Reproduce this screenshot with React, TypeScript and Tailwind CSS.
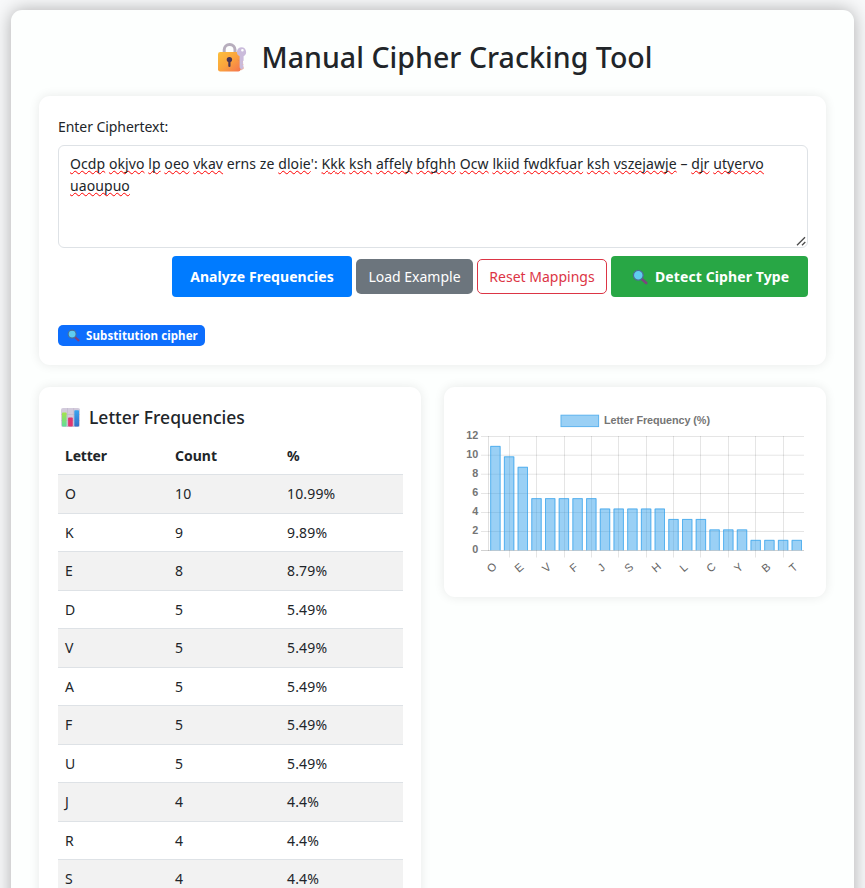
import React from "react";

const rows: [string, number, string][] = [
  ["O", 10, "10.99%"],
  ["K", 9, "9.89%"],
  ["E", 8, "8.79%"],
  ["D", 5, "5.49%"],
  ["V", 5, "5.49%"],
  ["A", 5, "5.49%"],
  ["F", 5, "5.49%"],
  ["U", 5, "5.49%"],
  ["J", 4, "4.4%"],
  ["R", 4, "4.4%"],
  ["S", 4, "4.4%"],
];

const bars = [
  10.99, 9.89, 8.79, 5.49, 5.49, 5.49, 5.49, 5.49, 4.4, 4.4, 4.4, 4.4, 4.4,
  3.3, 3.3, 3.3, 2.2, 2.2, 2.2, 1.1, 1.1, 1.1, 1.1,
];
const ticks = ["O", "E", "V", "F", "J", "S", "H", "L", "C", "Y", "B", "T"];
const gridX = [509, 536, 564, 591, 618, 646, 673, 700, 728, 755, 783];
const gridY = [436, 454.7, 473.7, 493, 512, 531];

function LockKey() {
  return (
    <svg className="mb-[2px] h-[30px] w-[30px] shrink-0" viewBox="0 0 30 30">
      <defs>
        <linearGradient id="lock" x1="0" y1="0" x2="1" y2="1">
          <stop offset="0" stopColor="#fbc03c" />
          <stop offset="0.5" stopColor="#fba43c" />
          <stop offset="1" stopColor="#f4744f" />
        </linearGradient>
      </defs>
      <path d="M7.2 12V7.8a5.4 5.4 0 0 1 10.8 0V12" fill="none" stroke="#b7aebd" strokeWidth="3" />
      <rect x="1" y="10" width="22.5" height="19.5" rx="2.2" fill="url(#lock)" />
      <circle cx="12.4" cy="17.6" r="2.7" fill="#4a3553" />
      <rect x="11.3" y="17.5" width="2.2" height="7.5" rx="1.1" fill="#4a3553" />
      <path d="M20.2 17.5l2.6 1V27l1 1.5 3-1.8-.2-1.6-1.2-1 1.2-1.5-1-1.3.6-2.8h-5z" fill="#d76e52" opacity="0.5" />
      <path d="M24.6 5.2a4.8 4.8 0 0 0-2 9.1v11.2l1.6 1.9 2.2-2v-2l-1-1 1-1.4-1-1.3 1.2-1.2v-4.3a4.8 4.8 0 0 0-2-9zm.8 1.8a1.3 1.3 0 1 1 0 2.6 1.3 1.3 0 0 1 0-2.6z" fill="#cabbdb" fillRule="evenodd" />
    </svg>
  );
}

function Magnifier({ className }: { className: string }) {
  return (
    <svg className={className} viewBox="0 0 16 16">
      <path d="M9.8 10l4.4 4" stroke="#7d4380" strokeWidth="2.6" strokeLinecap="round" />
      <circle cx="6.3" cy="6.3" r="4.9" fill="#5fcdf0" stroke="#4b6e94" strokeWidth="1.3" />
    </svg>
  );
}

function ChartIcon() {
  return (
    <svg className="h-[19px] w-[19px] shrink-0" viewBox="0 0 19 19">
      <defs>
        <linearGradient id="g" x1="0" y1="0" x2="0" y2="1">
          <stop offset="0" stopColor="#a5e34b" />
          <stop offset="1" stopColor="#5fdc9c" />
        </linearGradient>
        <linearGradient id="b" x1="0" y1="0" x2="0" y2="1">
          <stop offset="0" stopColor="#3aa5f0" />
          <stop offset="1" stopColor="#3470c8" />
        </linearGradient>
      </defs>
      <rect width="19" height="19" rx="2" fill="#d3cbdc" />
      <path d="M6.5 0v19M12.6 0v19M0 6.5h19M0 12.5h19" stroke="#bfb5cb" strokeWidth="0.6" />
      <rect x="1" y="4.4" width="4.6" height="14.2" rx="0.8" fill="url(#g)" />
      <rect x="7.1" y="9.6" width="4.7" height="9" rx="0.8" fill="#e0356f" />
      <rect x="13.3" y="2.2" width="4.7" height="16.4" rx="0.8" fill="url(#b)" />
    </svg>
  );
}

function Misspelt({ children }: { children: string }) {
  return (
    <span className="underline decoration-[#f00] decoration-wavy decoration-[1.25px] underline-offset-[1px] [text-decoration-skip-ink:none]">
      {children}
    </span>
  );
}

const message =
  "Ocdp okjvo lp oeo vkav erns ze dloie': Kkk ksh affely bfghh Ocw lkiid fwdkfuar ksh vszejawje – djr utyervo uaoupuo";
const known = ["erns", "ze", "–"];

function CipherText() {
  return (
    <>
      {message.split(" ").map((word, i) => {
        const m = word.match(/^([A-Za-z]+)(.*)$/);
        return (
          <React.Fragment key={i}>
            {i > 0 && " "}
            {known.includes(word) || !m ? word : (<><Misspelt>{m[1]}</Misspelt>{m[2]}</>)}
          </React.Fragment>
        );
      })}
    </>
  );
}

function FrequencyChart() {
  return (
    <svg className="block h-[174px] w-[346px]" viewBox="462 405 346 174" fontFamily="Liberation Sans, Arial, sans-serif" fontSize="10.8" fill="#666">
      <rect x="561" y="415.2" width="37.6" height="11.4" fill="#9ad0f5" stroke="#5cb3ee" />
      <text x="604" y="424.3" fontWeight="bold" fill="#757575" textLength="106">Letter Frequency (%)</text>
      {gridY.map((y) => (
        <rect key={y} x="481" y={y} width="323" height="1" fill="#000" fillOpacity="0.1" />
      ))}
      <rect x="481" y="550" width="323" height="1" fill="#000" fillOpacity="0.18" />
      <rect x="488" y="436" width="1" height="115" fill="#000" fillOpacity="0.12" />
      {gridX.map((x) => (
        <rect key={x} x={x} y="436" width="1" height="121.5" fill="#000" fillOpacity="0.1" />
      ))}
      {[12, 10, 8, 6, 4, 2, 0].map((v, i) => (
        <text key={v} x="478.3" y={439.3 + i * 19} textAnchor="end" fontWeight="bold" fill="#757575">{v}</text>
      ))}
      {bars.map((v, i) => {
        const left = 490.2 + i * 13.7;
        const top = 550.3 - v * 9.5;
        return (
          <g key={i}>
            <rect x={left} y={top} width="10.4" height={550.3 - top} fill="#36a2eb" fillOpacity="0.5" />
            <path d={`M${left + 0.5} 550.3V${top + 0.5}H${left + 9.9}V550.3`} fill="none" stroke="#36a2eb" strokeOpacity="0.75" strokeWidth="0.9" />
          </g>
        );
      })}
      {ticks.map((t, i) => (
        <text key={t} transform={`translate(${491.6 + i * 27.43} 567.5) rotate(-41)`} textAnchor="middle" y="3.9" fontSize="11.2">{t}</text>
      ))}
    </svg>
  );
}

const card = "rounded-[11px] bg-white shadow-[0_0_11px_rgba(0,0,0,0.09)]";

export default function App() {
  return (
    <div className="h-[888px] overflow-hidden bg-[#f8f9fa] px-[11px] pt-[10px] font-['Noto_Sans','Open_Sans',sans-serif] text-[14px] text-[#212529]">
      <div className="h-[1200px] rounded-[11px] bg-[#fdfffe] px-[28px] pt-[28px] shadow-[0_0_18px_rgba(0,0,0,0.3)]">
        <h1 className="flex h-[39px] items-center justify-center pl-[5px] text-[28.5px] font-medium">
          <LockKey />
          <span className="ml-[14px] whitespace-nowrap tracking-[0.05px]">Manual Cipher Cracking Tool</span>
        </h1>
        <section className={card + " mt-[19px] h-[269px] px-[19px] pt-[20px]"}>
          <label className="block h-[22px] leading-[22px] tracking-[-0.06px]">Enter Ciphertext:</label>
          <div className="relative mt-[7px] h-[103px] w-[750px] rounded-[6px] border border-[#dee2e6] pl-[11px] pt-[7px] leading-[22px]">
            <p className="w-[720px] tracking-[0.08px]"><CipherText /></p>
            <svg className="absolute bottom-[1px] right-[1px] h-[10px] w-[10px]" viewBox="0 0 10 10" stroke="#4a4a4a" strokeWidth="1.3">
              <path d="M1 9.3L9 1.3M6 9.3L9.3 6" fill="none" />
            </svg>
          </div>
          <div className="mt-[8px] flex h-[41px] w-[750px] items-center justify-end gap-[4px] whitespace-nowrap">
            <button className="h-[41px] w-[180px] rounded-[4px] bg-[#007bff] font-bold tracking-[0.06px] text-white">Analyze Frequencies</button>
            <button className="h-[35px] w-[117px] rounded-[5px] bg-[#6c757d] text-white">Load Example</button>
            <button className="h-[35px] w-[130px] rounded-[5px] border border-[#dc3545] text-[#dc3545]">Reset Mappings</button>
            <button className="flex h-[41px] w-[197px] items-center rounded-[4px] bg-[#28a745] pl-[21px] font-bold text-white">
              <Magnifier className="h-[16px] w-[16px]" />
              <span className="ml-[7px] tracking-[0.1px]">Detect Cipher Type</span>
            </button>
          </div>
          <div className="mt-[28px] flex h-[21px] w-[147px] items-center rounded-[5px] bg-[#0d6efd] pl-[9px] text-[11.5px] font-bold text-white">
            <Magnifier className="h-[13px] w-[13px]" />
            <span className="ml-[6px] whitespace-nowrap tracking-[0.1px]">Substitution cipher</span>
          </div>
        </section>
        <div className="mt-[22px] flex items-start gap-[23px]">
          <section className={card + " h-[700px] w-[382px] px-[19px] pt-[18px]"}>
            <h2 className="flex h-[24px] items-center pl-[3px] text-[17.5px] font-medium">
              <ChartIcon />
              <span className="ml-[9px] whitespace-nowrap">Letter Frequencies</span>
            </h2>
            <div className="mt-[8px] w-[345px]">
              <div className="grid h-[38px] grid-cols-[110px_112px_1fr] items-center border-b border-[#dee2e6] pl-[7px] font-bold">
                <span className="tracking-[-0.2px]">Letter</span><span>Count</span><span>%</span>
              </div>
              {rows.map(([l, c, p], i) => (
                <div key={l} className={"grid h-[38.5px] grid-cols-[110px_112px_1fr] items-center border-b border-[#dee2e6] pl-[7px] " + (i % 2 === 0 ? "bg-[#f2f2f2]" : "")}>
                  <span>{l}</span><span className="tracking-[0.15px]">{c}</span><span className="tracking-[0.15px]">{p}</span>
                </div>
              ))}
            </div>
          </section>
          <section className={card + " h-[210px] w-[383px] px-[18px] pt-[18px]"}>
            <FrequencyChart />
          </section>
        </div>
      </div>
    </div>
  );
}
